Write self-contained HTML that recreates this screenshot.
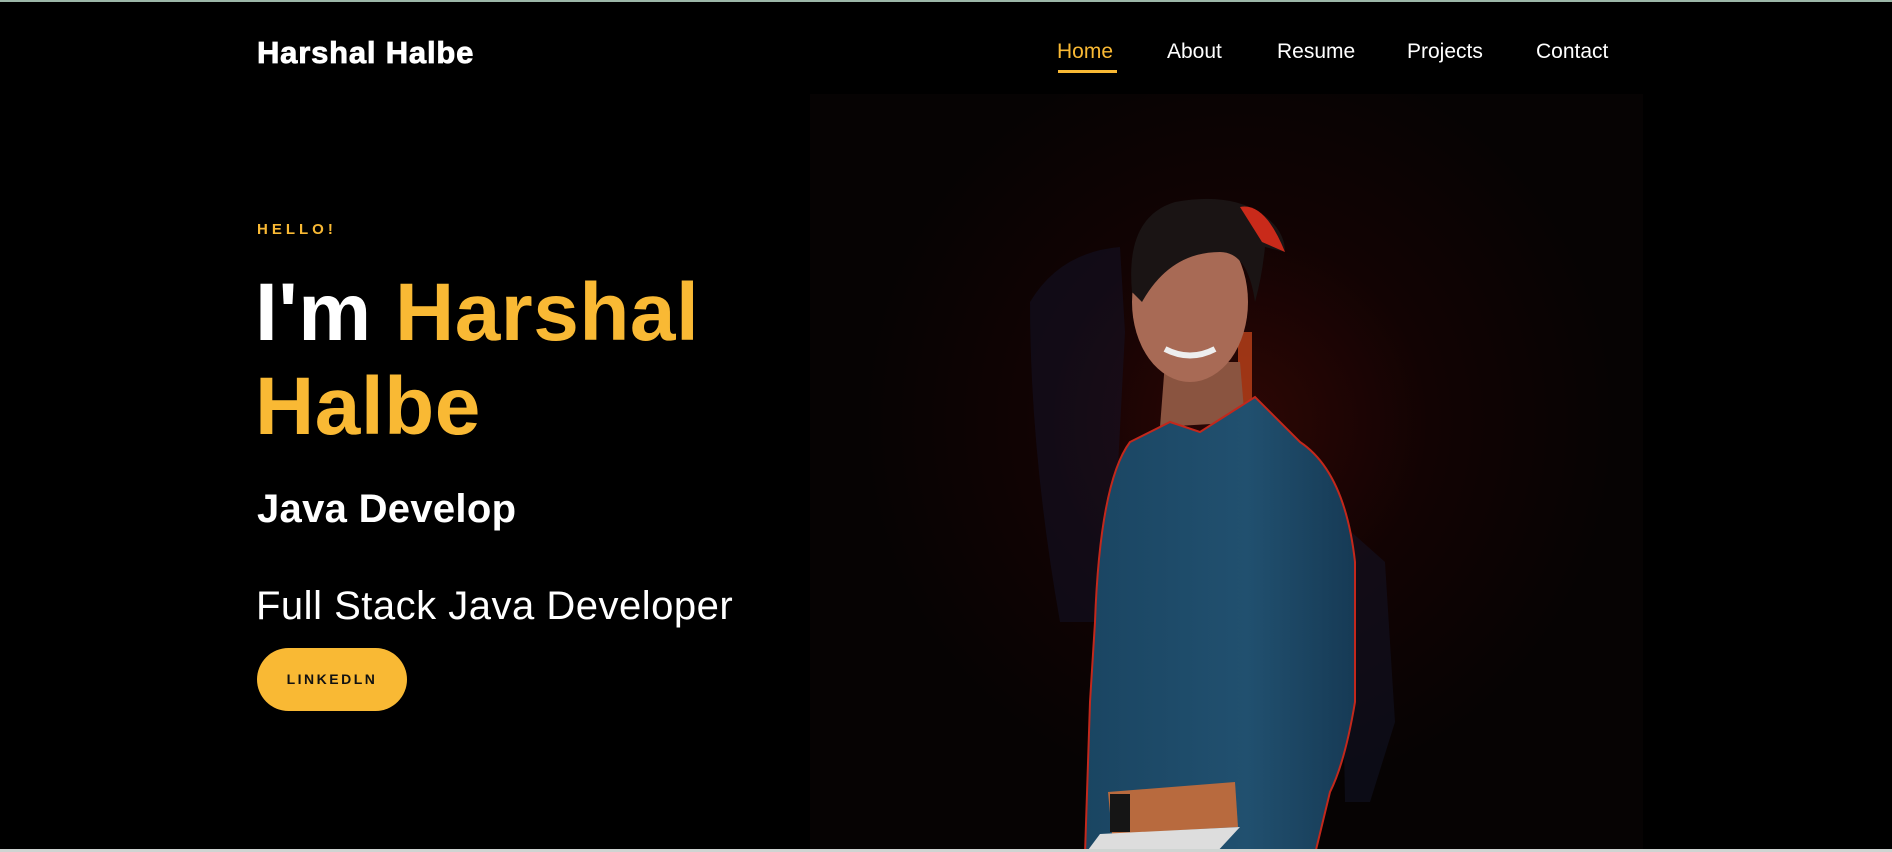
<!DOCTYPE html>
<html><head><meta charset="utf-8"><style>
*{margin:0;padding:0;box-sizing:border-box}
html,body{width:1892px;height:852px;overflow:hidden;background:#000;font-family:"Liberation Sans",sans-serif}
body{position:relative;border-top:2px solid #9cb7a8}
.logo{position:absolute;left:257px;top:33px;color:#fff;font-weight:900;font-size:31px;letter-spacing:0.8px;-webkit-text-stroke:0.8px #fff}
.nav a{position:absolute;top:38px;color:#fff;font-size:21px;text-decoration:none}
.nav a.act{color:#f9b934}
.ul{position:absolute;left:1058px;top:68px;width:59px;height:3px;background:#f9b934}
.hello{position:absolute;left:257px;top:219px;color:#f9b934;font-weight:700;font-size:15px;letter-spacing:4px}
h1{position:absolute;left:255px;top:264px;font-size:82px;line-height:94px;font-weight:700;color:#fff;letter-spacing:0.5px}
h1 span{color:#f9b934}
.jd{position:absolute;left:257px;top:485px;color:#fff;font-weight:700;font-size:40px;letter-spacing:0.3px}
.fs{position:absolute;left:256px;top:582px;color:#fff;font-size:40px;letter-spacing:0.5px}
.btn{position:absolute;left:257px;top:646px;width:150px;height:63px;border-radius:32px;background:#f9b934;color:#111;font-weight:700;font-size:14px;letter-spacing:2.5px;text-align:center;line-height:63px}
svg{position:absolute;left:810px;top:92px}
.bl{position:absolute;left:0;bottom:0;width:1892px;height:3px;background:#cfd4d2}
</style></head><body>
<div class="logo">Harshal Halbe</div>
<div class="nav">
<a class="act" style="left:1057px">Home</a>
<a style="left:1167px">About</a>
<a style="left:1277px">Resume</a>
<a style="left:1407px">Projects</a>
<a style="left:1536px">Contact</a>
</div>
<div class="ul"></div>
<div class="hello">HELLO!</div>
<h1>I'm <span>Harshal<br>Halbe</span></h1>
<div class="jd">Java Develop</div>
<div class="fs">Full Stack Java Developer</div>
<div class="btn">LINKEDLN</div>
<svg width="833" height="760" viewBox="810 92 833 760">
<defs>
<radialGradient id="g" cx="1240" cy="420" r="380" gradientUnits="userSpaceOnUse">
<stop offset="0" stop-color="#2e0705"/><stop offset="0.5" stop-color="#120303"/><stop offset="1" stop-color="#060303"/>
</radialGradient>
<linearGradient id="sh" x1="0" y1="0" x2="1" y2="0">
<stop offset="0" stop-color="#1a4562"/><stop offset="0.6" stop-color="#21506f"/><stop offset="1" stop-color="#163a55"/>
</linearGradient>
</defs>
<rect x="810" y="92" width="833" height="760" fill="url(#g)"/>
<path d="M1030 300 Q1060 250 1120 245 L1125 330 L1110 620 L1060 620 Q1030 450 1030 300Z" fill="#14162e" opacity=".45"/>
<path d="M1340 520 L1385 560 L1395 720 L1370 800 L1345 800Z" fill="#15182e" opacity=".45"/>
<rect x="1238" y="330" width="14" height="130" fill="#d24a1c" opacity=".7"/>
<path d="M1165 360 L1240 360 L1245 420 L1160 425Z" fill="#8a5440"/>
<path d="M1095 620 Q1100 480 1130 440 L1170 420 L1200 430 L1255 395 L1300 440 Q1345 470 1355 560 L1355 700 Q1345 760 1330 790 L1315 852 L1085 852 L1090 700Z" fill="url(#sh)" stroke="#c3281c" stroke-width="2"/>
<path d="M1108 790 L1235 780 L1238 825 L1112 832Z" fill="#b86a3e"/>
<rect x="1110" y="792" width="20" height="38" fill="#151515"/>
<path d="M1085 852 L1100 832 L1240 825 L1215 852Z" fill="#ddd"/>
<ellipse cx="1190" cy="300" rx="58" ry="80" fill="#a86a55"/>
<path d="M1132 290 Q1125 215 1175 200 Q1230 190 1262 212 Q1285 228 1285 250 L1265 245 Q1262 275 1255 300 Q1248 250 1220 250 Q1170 250 1142 300Z" fill="#1a1414"/>
<path d="M1240 205 Q1265 200 1285 250 L1262 240Z" fill="#c92a1a"/>
<path d="M1165 347 Q1190 360 1215 347" stroke="#eee" stroke-width="6" fill="none"/>
</svg>
<div class="bl"></div>
</body></html>
